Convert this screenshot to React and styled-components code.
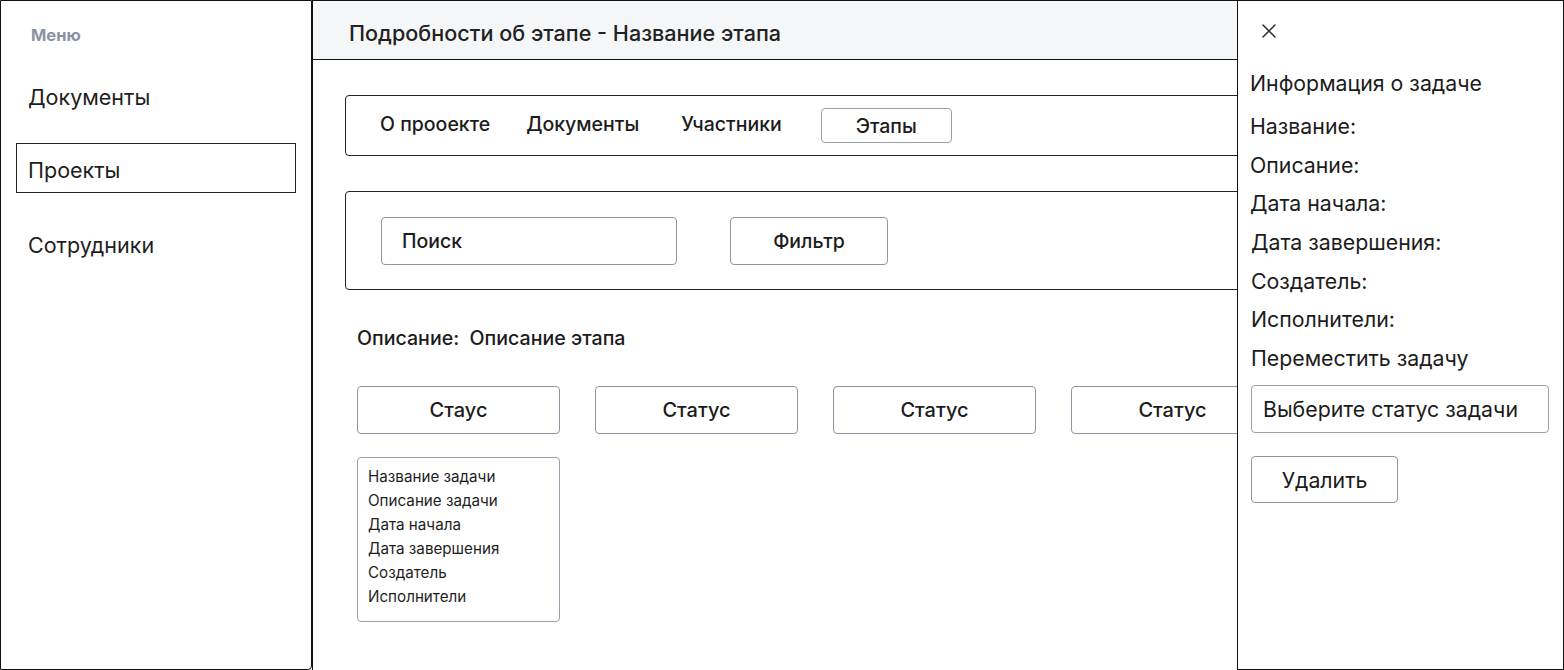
import React from "react";
import styled, { createGlobalStyle } from "styled-components";

const Global = createGlobalStyle`
  * { box-sizing: border-box; }
  html, body { margin: 0; padding: 0; background: #fff; }
  body { font-family: Inter, "Noto Sans", sans-serif; color: #1c1c1c; }
  #root { width: 1564px; height: 670px; overflow: hidden; }
`;

const Page = styled.div`
  position: relative;
  display: flex;
  width: 1564px;
  height: 670px;
  overflow: hidden;
`;

const Sidebar = styled.aside`
  flex: 0 0 312px;
  width: 312px;
  min-width: 0;
  height: 670px;
  border: 1px solid #111;
  border-bottom-right-radius: 4px;
  padding: 24px 14px 0 15px;
  display: flex;
  flex-direction: column;
`;

const MenuLabel = styled.div`
  font-size: 16.5px;
  font-weight: 700;
  color: #8b93a1;
  padding-left: 15px;
  line-height: 20px;
`;

const NavItem = styled.div`
  font-size: 21.5px;
  font-weight: 400;
  line-height: 26px;
  color: #1e1e1e;
  height: 50px;
  display: flex;
  align-items: center;
  padding: 3px 0 0 11px;
  border: 1px solid ${(p) => (p.$active ? "#222" : "transparent")};
  width: 280px;
  margin-top: ${(p) => p.$mt}px;
`;

const Main = styled.main`
  flex: 1;
  min-width: 0;
  height: 670px;
  border-top: 1px solid #111;
  border-left: 1px solid #111;
  display: flex;
  flex-direction: column;
`;

const Header = styled.header`
  height: 59px;
  background: #f5f6f8;
  border-bottom: 1px solid #111;
  display: flex;
  align-items: center;
  padding: 5px 0 0 36px;
  font-size: 21.6px;
  font-weight: 500;
  color: #222;
`;

const Content = styled.div`
  padding: 35px 33px 0 32px;
  display: flex;
  flex-direction: column;
`;

const Box = styled.div`
  border: 1px solid #222;
  border-radius: 4px;
  height: ${(p) => p.$h}px;
  display: flex;
  align-items: center;
  margin-bottom: 35px;
  flex-shrink: 0;
`;

const Tabs = styled(Box)`
  padding: 0 0 3px 34px;
`;

const Tab = styled.div`
  font-size: 19.5px;
  font-weight: 500;
  color: #1c1c1c;
  white-space: nowrap;
  margin-right: ${(p) => p.$mr}px;
`;

const TabButton = styled.div`
  width: 131px;
  height: 35px;
  margin-top: 3px;
  border: 1px solid #9aa1ad;
  border-radius: 4px;
  display: flex;
  align-items: center;
  justify-content: center;
  font-size: 19.5px;
  font-weight: 500;
  flex-shrink: 0;
`;

const SearchBar = styled(Box)`
  padding-left: 35px;
`;

const Input = styled.div`
  width: 296px;
  height: 48px;
  border: 1px solid #8f96a3;
  border-radius: 4px;
  display: flex;
  align-items: center;
  padding-left: 20px;
  font-size: 19.5px;
  font-weight: 500;
  margin-right: 53px;
  flex-shrink: 0;
`;

const Button = styled.div`
  width: ${(p) => p.$w}px;
  height: ${(p) => p.$h || 48}px;
  border: 1px solid #8f96a3;
  border-radius: 4px;
  display: flex;
  align-items: center;
  justify-content: center;
  font-size: ${(p) => p.$fs || 19.5}px;
  font-weight: ${(p) => p.$fw || 500};
  white-space: nowrap;
  flex-shrink: 0;
`;

const Description = styled.div`
  padding-left: 12px;
  font-size: 19.6px;
  font-weight: 500;
  line-height: 22px;
  margin-top: 2px;
  white-space: nowrap;
`;

const Columns = styled.div`
  display: flex;
  gap: 35px;
  padding-left: 12px;
  margin-top: 37px;
`;

const Column = styled.div`
  display: flex;
  flex-direction: column;
  gap: 23px;
  width: 203px;
  flex-shrink: 0;
`;

const TaskCard = styled.div`
  border: 1px solid #9aa1ad;
  border-radius: 4px;
  height: 165px;
  padding: 7px 10px 0 10px;
`;

const CardLine = styled.div`
  font-size: 15.2px;
  line-height: 24px;
  color: #1e1e1e;
  white-space: nowrap;
`;

const Panel = styled.aside`
  position: absolute;
  top: 0;
  right: 0;
  width: 327px;
  height: 670px;
  background: #fff;
  border: 1px solid #111;
  padding: 0 13px 0 12px;
  display: flex;
  flex-direction: column;
`;

const CloseBtn = styled.div`
  width: 20px;
  height: 20px;
  margin: 20px 0 0 9px;
  display: flex;
  align-items: center;
  justify-content: center;
`;

const PanelTitle = styled.div`
  font-size: 21.3px;
  font-weight: 400;
  line-height: 24px;
  margin-top: 30px;
  margin-bottom: 12px;
  white-space: nowrap;
`;

const Field = styled.div`
  font-size: 21.3px;
  font-weight: 400;
  line-height: 24px;
  height: 38.6px;
  display: flex;
  align-items: center;
  white-space: nowrap;
  padding-left: ${(p) => p.$pl || 0}px;
`;

const Select = styled.div`
  width: 298px;
  height: 48px;
  margin-left: 1px;
  margin-top: 8px;
  border: 1px solid #9aa1ad;
  border-radius: 4px;
  display: flex;
  align-items: center;
  padding-left: 11px;
  font-size: 21.3px;
  white-space: nowrap;
`;

const DeleteWrap = styled.div`
  margin: 23px 0 0 1px;
`;

const cards = [
  "Название задачи",
  "Описание задачи",
  "Дата начала",
  "Дата завершения",
  "Создатель",
  "Исполнители",
];

const statuses = ["Стаус", "Статус", "Статус", "Статус"];

const fields = [
  ["Название:", 0],
  ["Описание:", 0],
  ["Дата начала:", 0],
  ["Дата завершения:", 1],
  ["Создатель:", 1],
  ["Исполнители:", 1],
  ["Переместить задачу", 1],
];

export default function App() {
  return (
    <>
      <Global />
      <Page>
        <Sidebar>
          <MenuLabel>Меню</MenuLabel>
          <NavItem $mt={25}>Документы</NavItem>
          <NavItem $mt={23} $active>Проекты</NavItem>
          <NavItem $mt={25}>Сотрудники</NavItem>
        </Sidebar>
        <Main>
          <Header>Подробности об этапе - Название этапа</Header>
          <Content>
            <Tabs $h={61}>
              <Tab $mr={36}>О прооекте</Tab>
              <Tab $mr={42}>Документы</Tab>
              <Tab $mr={39}>Участники</Tab>
              <TabButton>Этапы</TabButton>
            </Tabs>
            <SearchBar $h={99}>
              <Input>Поиск</Input>
              <Button $w={158}>Фильтр</Button>
            </SearchBar>
            <Description>Описание:&nbsp; Описание этапа</Description>
            <Columns>
              {statuses.map((s, i) => (
                <Column key={i}>
                  <Button $w={203} $fs={20}>{s}</Button>
                  {i === 0 && (
                    <TaskCard>
                      {cards.map((c) => (
                        <CardLine key={c}>{c}</CardLine>
                      ))}
                    </TaskCard>
                  )}
                </Column>
              ))}
            </Columns>
          </Content>
        </Main>
        <Panel>
          <CloseBtn>
            <svg width="16" height="16" viewBox="0 0 16 16">
              <path d="M2 2 L14 14 M14 2 L2 14" stroke="#2a2a33" strokeWidth="1.5" strokeLinecap="round" />
            </svg>
          </CloseBtn>
          <PanelTitle>Информация о задаче</PanelTitle>
          {fields.map(([f, pl]) => (
            <Field key={f} $pl={pl}>{f}</Field>
          ))}
          <Select>Выберите статус задачи</Select>
          <DeleteWrap>
            <Button $w={147} $h={47} $fs={21.3} $fw={400}>Удалить</Button>
          </DeleteWrap>
        </Panel>
      </Page>
    </>
  );
}
